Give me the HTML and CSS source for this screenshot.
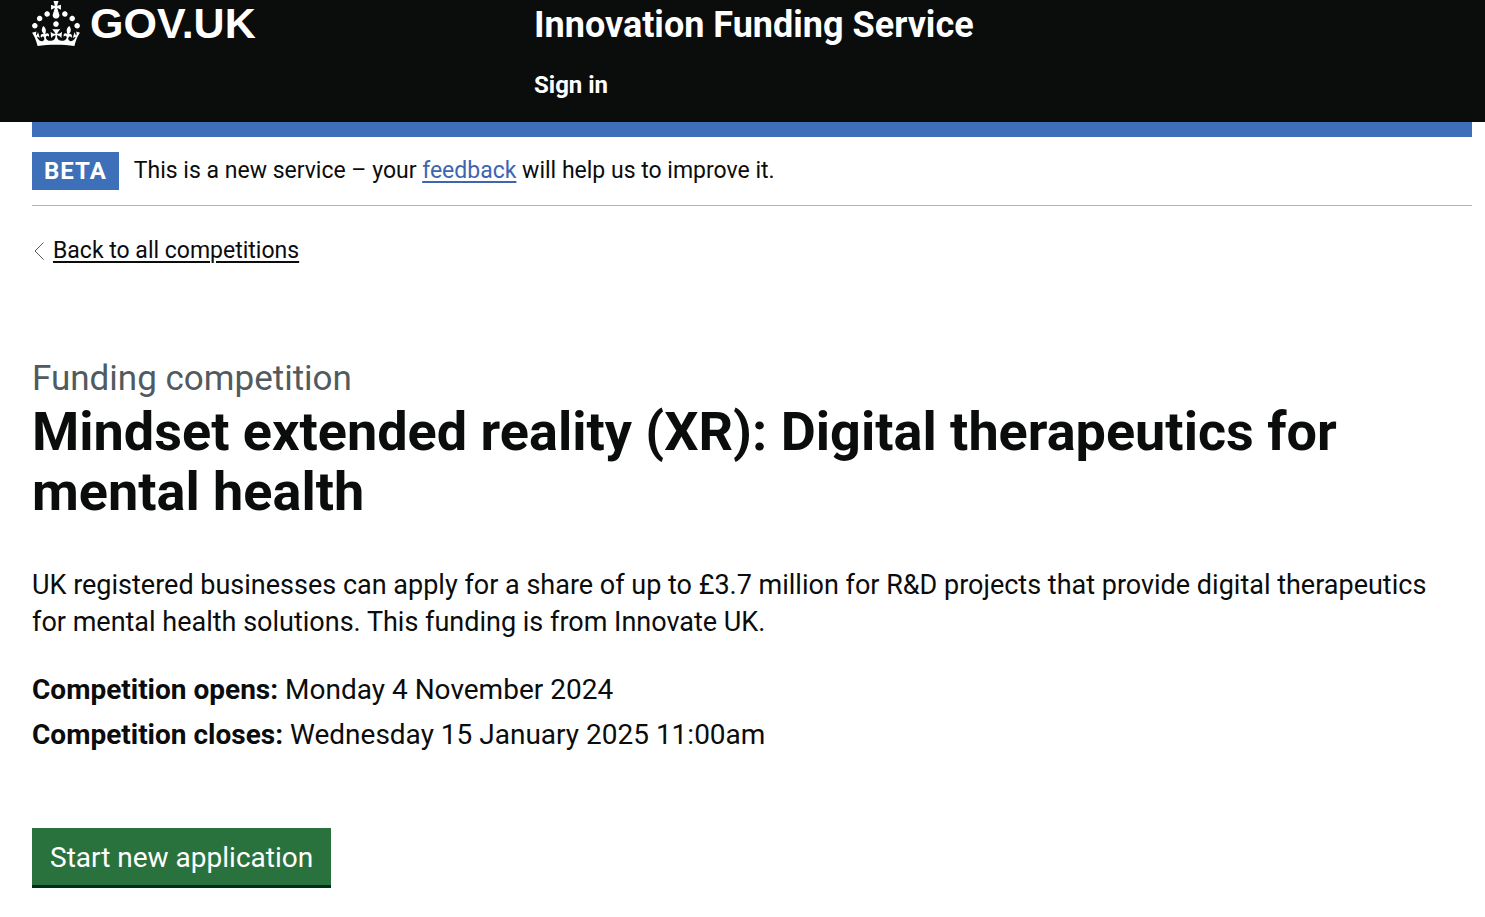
FILE: index.html
```
<!DOCTYPE html>
<html lang="en">
<head>
    <meta charset="UTF-8">
    <meta name="viewport" content="width=device-width, initial-scale=1.0">
    <title>Mindset extended reality (XR) - Innovation Funding Service</title>
    <link rel="stylesheet" href="styles.css">
</head>
<body>
    <header class="header">
        <div class="header-container">
            <a href="/" class="logo">
                <svg class="crown" viewBox="0 0 32 30" aria-hidden="true">
                    <path fill="currentColor" d="M22.6 10.4c-1 .4-2-.1-2.4-1-.4-.9.1-2 1-2.4.9-.4 2 .1 2.4 1s-.1 2-1 2.4m-5.9 6.7c-.9.4-2-.1-2.4-1-.4-.9.1-2 1-2.4.9-.4 2 .1 2.4 1s-.1 2-1 2.4m10.8-3.7c-1 .4-2-.1-2.4-1-.4-.9.1-2 1-2.4.9-.4 2 .1 2.4 1s0 2-1 2.4m3.3 4.8c-1 .4-2-.1-2.4-1-.4-.9.1-2 1-2.4.9-.4 2 .1 2.4 1s-.1 2-1 2.4M17 4.7l2.3 1.2V2.5l-2.3.7-.2-.2.9-3h-3.4l.9 3-.2.2c-.1.1-2.3-.7-2.3-.7v3.4L15 4.7c.1.1.1.2.2.2l-1.3 4c-.1.2-.1.4-.1.6 0 1.1.8 2 1.9 2.2h.7c1-.2 1.9-1.1 1.9-2.1 0-.2 0-.4-.1-.6l-1.3-4c-.1-.2 0-.2.1-.3m-7.6 5.7c.9.4 2-.1 2.4-1 .4-.9-.1-2-1-2.4-.9-.4-2 .1-2.4 1s0 2 1 2.4m-5 3c.9.4 2-.1 2.4-1 .4-.9-.1-2-1-2.4-.9-.4-2 .1-2.4 1s.1 2 1 2.4m-3.2 4.8c.9.4 2-.1 2.4-1 .4-.9-.1-2-1-2.4-.9-.4-2 .1-2.4 1s0 2 1 2.4m14.8 11c4.4 0 8.6.3 12.3.8 1.1-4.5 2.4-7 3.7-8.8l-2.5-.9c.2 1.3.3 1.9 0 2.7-.4-.4-.8-1.1-1.1-2.3l-1.2 4c.7-.5 1.3-.8 2-.9-1.1 2.5-2.6 3.1-3.5 3-1.1-.2-1.7-1.2-1.5-2.1.3-1.2 1.5-1.5 2.1-.1 1.1-2.3-.8-3-2-2.3 1.9-1.9 2.1-3.5.6-5.6-2.1 1.6-2.1 3.2-1.2 5.5-1.2-1.4-3.2-.6-2.5 1.6.9-1.4 2.1-.5 1.9.8-.2 1.1-1.7 2.1-3.5 1.9-2.7-.2-2.9-2.1-2.9-3.6.7-.1 1.9.5 2.9 1.9l.4-4.3c-1.1 1.1-2.1 1.4-3.2 1.4.4-1.2 2.1-3 2.1-3h-5.4s1.7 1.9 2.1 3c-1.1 0-2.1-.2-3.2-1.4l.4 4.3c1-1.4 2.2-2 2.9-1.9-.1 1.5-.2 3.4-2.9 3.6-1.9.2-3.4-.8-3.5-1.9-.2-1.3 1-2.2 1.9-.8.7-2.3-1.2-3-2.5-1.6.9-2.2.9-3.9-1.2-5.5-1.5 2-1.3 3.7.6 5.6-1.2-.7-3.1 0-2 2.3.6-1.4 1.8-1.1 2.1.1.2.9-.3 1.9-1.5 2.1-.9.2-2.4-.5-3.5-3 .6 0 1.2.3 2 .9l-1.2-4c-.3 1.1-.7 1.9-1.1 2.3-.3-.8-.2-1.4 0-2.7l-2.9.9C1.3 23 2.6 25.5 3.7 30c3.7-.5 7.9-.8 12.3-.8"/>
                </svg>
                <span class="logo-text">GOV.UK</span>
            </a>
            <div class="header-content">
                <a href="/" class="service-name">Innovation Funding Service</a>
                <nav>
                    <a href="/sign-in" class="nav-link">Sign in</a>
                </nav>
            </div>
        </div>
    </header>

    <div class="container">
        <div class="phase-banner">
            <strong class="phase-tag">BETA</strong>
            <span>This is a new service – your <a href="/feedback" class="link">feedback</a> will help us to improve it.</span>
        </div>

        <a href="/competition/search" class="back-link">
            <svg class="back-arrow" viewBox="0 0 10 18" aria-hidden="true">
                <path d="M9.5 0.5L1 9l8.5 8.5" fill="none" stroke="currentColor"/>
            </svg>
            <span class="back-text">Back to all competitions</span>
        </a>

        <main>
            <h1>
                <span class="caption">Funding competition</span>
                Mindset extended reality (XR): Digital therapeutics for mental health
            </h1>
            <p class="summary">UK registered businesses can apply for a share of up to £3.7 million for R&amp;D projects that provide digital therapeutics for mental health solutions. This funding is from Innovate UK.</p>
            <ul class="dates">
                <li><strong>Competition opens:</strong> Monday 4 November 2024</li>
                <li><strong>Competition closes:</strong> Wednesday 15 January 2025 11:00am</li>
            </ul>
            <button type="button" class="button">Start new application</button>
        </main>
    </div>
</body>
</html>
```

FILE: styles.css
```
* {
    box-sizing: border-box;
}
body {
    margin: 0;
    font-family: Roboto, Arial, sans-serif;
    font-size: 28px;
    line-height: 37px;
    color: #0b0c0c;
    background-color: #fff;
}
.header {
    background-color: #0b0c0c;
    color: #fff;
    padding: 0 13px 0 32px;
}
.header a {
    color: #fff;
    text-decoration: none;
}
.header-container {
    display: grid;
    grid-template-columns: 1fr 2fr;
    gap: 33px;
    align-items: start;
    padding-bottom: 22px;
}
.logo {
    display: flex;
    gap: 10px;
    height: 47px;
    align-items: center;
}
.crown {
    width: 48px;
    height: 45px;
}
.logo-text {
    font-family: "Liberation Sans", Arial, sans-serif;
    font-size: 43px;
    font-weight: bold;
}
.service-name {
    display: block;
    font-size: 36px;
    font-weight: bold;
    line-height: 50px;
    margin-bottom: 20px;
}
.nav-link {
    display: block;
    font-size: 24px;
    font-weight: bold;
    line-height: 30px;
}
.container {
    margin: 0 13px 0 32px;
    border-top: 15px solid #3d70b8;
}
.phase-banner {
    display: flex;
    align-items: center;
    gap: 15px;
    padding: 15px 0;
    border-bottom: 1px solid #b1b4b6;
    font-size: 23px;
    line-height: 38px;
}
.phase-tag {
    padding: 0 12px;
    background-color: #3d70b8;
    color: #fff;
    font-size: 24px;
    letter-spacing: 1px;
}
.link {
    color: #3d65b0;
    text-decoration-thickness: 2px;
    text-underline-offset: 3px;
}
.back-link {
    display: inline-flex;
    align-items: center;
    gap: 9px;
    margin: 30px 0 90px;
    padding-left: 2px;
    color: #0b0c0c;
    font-size: 23px;
    line-height: 30px;
    text-decoration: none;
}
.back-arrow {
    width: 10px;
    height: 18px;
    color: #505a5f;
}
.back-text {
    text-decoration: underline;
    text-decoration-thickness: 2px;
    text-underline-offset: 3px;
}
h1 {
    margin: 0 0 45px;
    font-size: 54px;
    line-height: 60px;
}
.caption {
    display: block;
    color: #505a5f;
    font-size: 35px;
    font-weight: normal;
    line-height: 46px;
}
.summary {
    margin: 0 0 30px;
    padding-right: 15px;
    font-size: 27px;
}
.dates {
    list-style: none;
    margin: 0 0 75px;
    padding: 0;
}
.dates li {
    margin-bottom: 8px;
}
.button {
    display: block;
    padding: 12px 18px 9px;
    border: none;
    border-bottom: 3px solid #002d18;
    background-color: #2a723d;
    color: #fff;
    font: inherit;
    line-height: 36px;
    cursor: pointer;
}
```
